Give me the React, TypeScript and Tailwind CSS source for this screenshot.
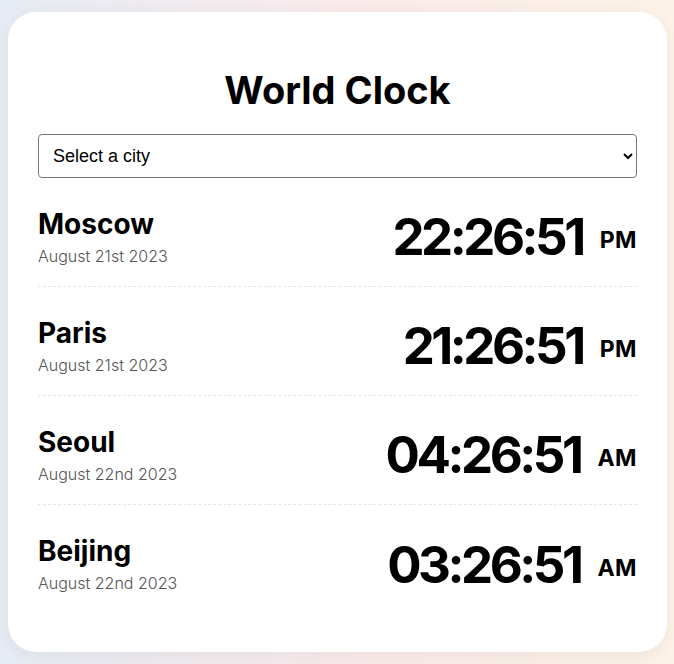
const cities = [
    { name: 'Moscow', date: 'August 21st 2023', time: '22:26:51', period: 'PM' },
    { name: 'Paris', date: 'August 21st 2023', time: '21:26:51', period: 'PM' },
    { name: 'Seoul', date: 'August 22nd 2023', time: '04:26:51', period: 'AM' },
    { name: 'Beijing', date: 'August 22nd 2023', time: '03:26:51', period: 'AM' },
];

const CityRow = ({
    city,
    last,
}: {
    city: (typeof cities)[number];
    last: boolean;
}) => {
    return (
        <div
            className={`flex h-[109px] items-center justify-between pt-[9px] ${
                last ? '' : 'border-b border-dashed border-[#e6e6e6]'
            }`}
        >
            <div className="flex flex-col">
                <p className="text-[28px] font-bold leading-[34px] text-black">
                    {city.name}
                </p>
                <p className="mt-[4px] text-[16px] font-light leading-[22px] text-[#555]">
                    {city.date}
                </p>
            </div>
            <div className="flex items-center">
                <span className="text-[51px] font-bold leading-none tracking-[-3.5px] text-black">
                    {city.time}
                </span>
                <span className="ml-[17px] mt-[8px] text-[23px] font-bold leading-none tracking-[0.5px] text-black">
                    {city.period}
                </span>
            </div>
        </div>
    );
};

const App = () => {
    return (
        <div
            className="h-[664px] w-[674px] overflow-hidden bg-[linear-gradient(90deg,#e6ecf4_0%,#f9eaeb_50%,#fcf2e6_100%)] pl-[8px] pt-[12px]"
            style={{ fontFamily: 'Inter, "Noto Sans", sans-serif' }}
        >
            <div className="h-[640px] w-[659px] rounded-[28px] bg-white px-[30px] pt-[54px] shadow-[0_4px_18px_rgba(0,0,0,0.06)]">
                <h1 className="text-center text-[38px] font-bold leading-[48px] text-black">
                    World Clock
                </h1>
                <select
                    className="mt-[20px] h-[44px] w-full rounded-[4px] border border-[#767676] bg-white px-[10px] text-[18px] text-black"
                    style={{ fontFamily: '"Liberation Sans", Arial, sans-serif' }}
                    defaultValue=""
                >
                    <option value="">Select a city</option>
                    {cities.map((c) => (
                        <option key={c.name} value={c.name}>
                            {c.name}
                        </option>
                    ))}
                </select>
                <div className="flex flex-col">
                    {cities.map((city, i) => (
                        <CityRow
                            key={city.name}
                            city={city}
                            last={i === cities.length - 1}
                        />
                    ))}
                </div>
            </div>
        </div>
    );
};

export default App;
